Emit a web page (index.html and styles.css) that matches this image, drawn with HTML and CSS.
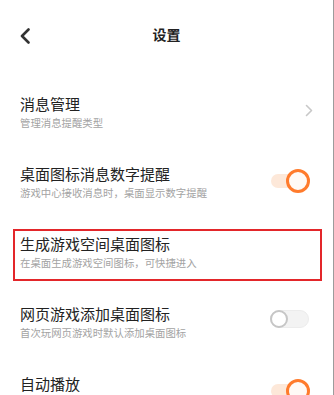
FILE: index.html
```html
<!DOCTYPE html>
<html lang="zh-CN">
<head>
    <meta charset="UTF-8">
    <meta name="viewport" content="width=device-width, initial-scale=1.0">
    <title>设置</title>
    <link rel="stylesheet" href="styles.css">
</head>
<body>
    <div class="screen">
        <div class="header">
            <svg class="back" width="12" height="16" viewBox="0 0 12 16">
                <polyline points="9.5,1.5 3,8 9.5,14.5" />
            </svg>
            <div class="header-title">设置</div>
        </div>

        <div class="list">
            <div class="row">
                <div class="text">
                    <div class="title">消息管理</div>
                    <div class="sub">管理消息提醒类型</div>
                </div>
                <svg class="arrow" width="8" height="13" viewBox="0 0 8 13">
                    <polyline points="1.5,1.5 6.5,6.5 1.5,11.5" />
                </svg>
            </div>

            <div class="row">
                <div class="text">
                    <div class="title">桌面图标消息数字提醒</div>
                    <div class="sub">游戏中心接收消息时，桌面显示数字提醒</div>
                </div>
                <div class="switch on"><span class="track"></span><span class="knob"></span></div>
            </div>

            <div class="row">
                <div class="mark"></div>
                <div class="text">
                    <div class="title">生成游戏空间桌面图标</div>
                    <div class="sub">在桌面生成游戏空间图标，可快捷进入</div>
                </div>
            </div>

            <div class="row">
                <div class="text">
                    <div class="title">网页游戏添加桌面图标</div>
                    <div class="sub">首次玩网页游戏时默认添加桌面图标</div>
                </div>
                <div class="switch off"><span class="track"></span><span class="knob"></span></div>
            </div>

            <div class="row">
                <div class="text">
                    <div class="title">自动播放</div>
                </div>
                <div class="switch on"><span class="track"></span><span class="knob"></span></div>
            </div>
        </div>
    </div>
</body>
</html>
```

FILE: styles.css
```css
body {
    margin: 0;
    background: #fff;
    font-family: "Noto Sans CJK SC", "Noto Sans", sans-serif;
}

.screen {
    width: 333px;
    height: 395px;
    border-right: 1px solid #9c9c9c;
    overflow: hidden;
    background: #fff;
}

/* header */
.header {
    height: 73px;
    box-sizing: border-box;
    padding-bottom: 6px;
    display: flex;
    align-items: center;
    justify-content: center;
    position: relative;
}
.header .back {
    position: absolute;
    left: 19px;
    top: 28px;
}
.back polyline {
    fill: none;
    stroke: #333;
    stroke-width: 2.6;
    stroke-linecap: round;
    stroke-linejoin: round;
}
.header-title {
    font-size: 14px;
    font-weight: bold;
    color: #222;
    line-height: 20px;
}

/* rows */
.list {
    padding-top: 4px;
}
.row {
    height: 70px;
    box-sizing: border-box;
    padding: 0 23px 0 20px;
    display: flex;
    align-items: center;
    position: relative;
}
.text {
    flex: 1;
    min-height: 36px;
}
.title {
    font-size: 15px;
    line-height: 20px;
    color: #222;
}
.sub {
    margin-top: 2px;
    font-size: 10.4px;
    line-height: 14px;
    color: #a3a3a3;
}
.arrow {
    margin-right: -3px;
    margin-bottom: 3px;
}
.arrow polyline {
    fill: none;
    stroke: #c8c8c8;
    stroke-width: 1.6;
    stroke-linecap: round;
    stroke-linejoin: round;
}

/* highlighted item */
.mark {
    position: absolute;
    left: 13px;
    top: 12px;
    width: 309px;
    height: 52px;
    box-sizing: border-box;
    border: 2px solid #e3262a;
}

/* switches */
.switch {
    width: 40px;
    height: 24px;
    position: relative;
    margin-bottom: 2px;
}
.switch .track,
.switch .knob {
    position: absolute;
    box-sizing: border-box;
    border-radius: 50%;
}
.switch .track {
    border-radius: 9px;
}
.switch.on .track {
    left: 1px;
    top: 5px;
    width: 34px;
    height: 14px;
    background: #fde8d9;
}
.switch.on .knob {
    right: 0;
    top: 0;
    width: 24px;
    height: 24px;
    border: 3px solid #ff7b2c;
    background: #fffaf6;
}
.switch.off {
    margin-bottom: 6px;
}
.switch.off .track {
    left: 0;
    top: 3px;
    width: 39px;
    height: 18px;
    background: #f3f3f3;
    border: 1px solid #ececec;
}
.switch.off .knob {
    left: 0;
    top: 3px;
    width: 18px;
    height: 18px;
    border: 2.5px solid #c6c6c6;
    background: #fff;
}
```
